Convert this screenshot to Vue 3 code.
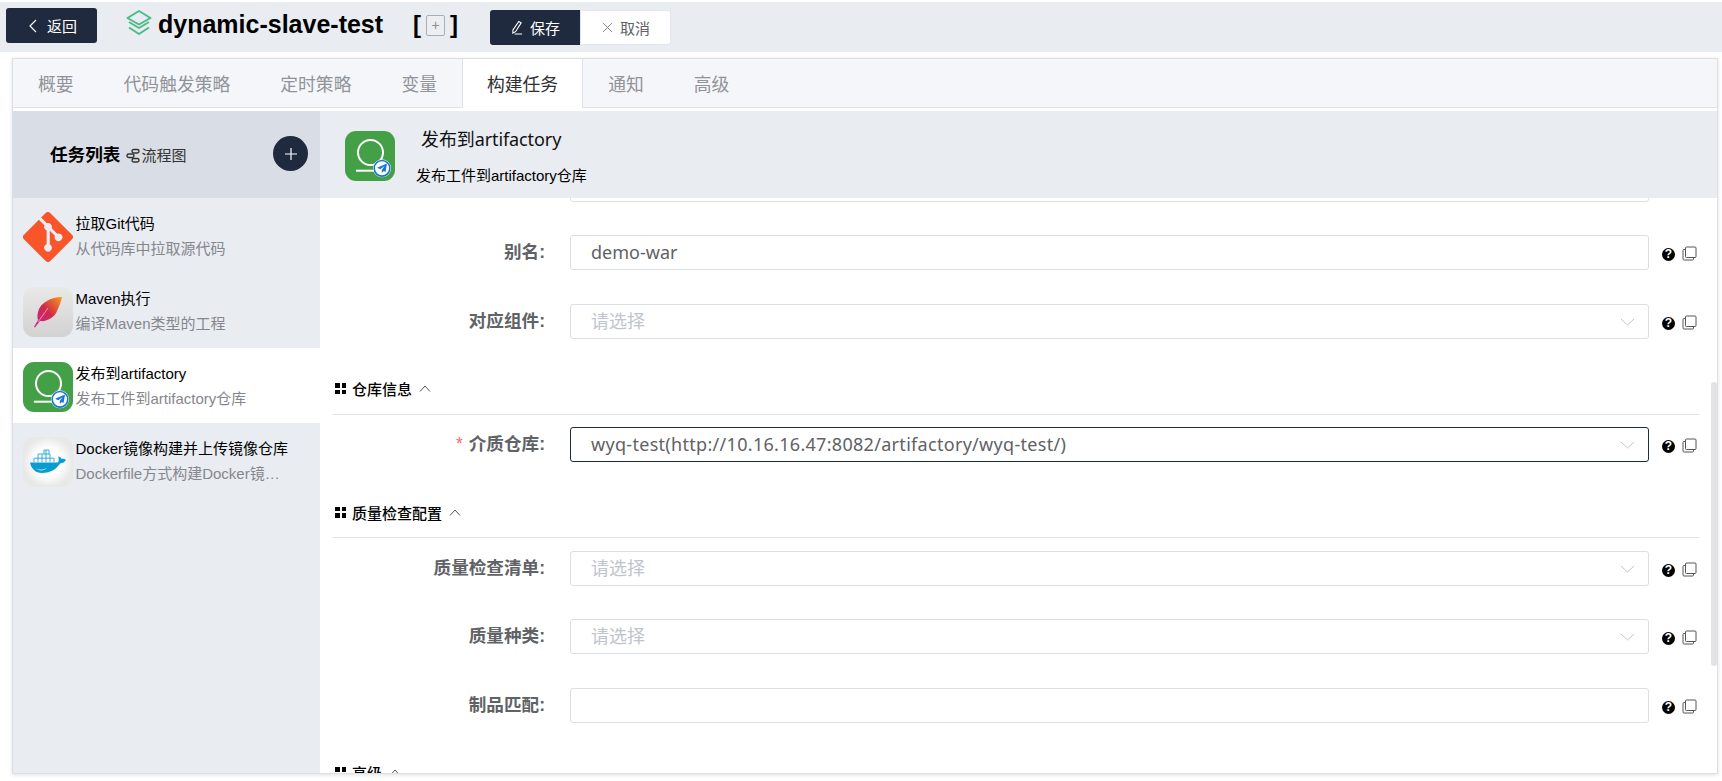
<script setup>
const tabs = ['概要', '代码触发策略', '定时策略', '变量', '构建任务', '通知', '高级']
const tasks = [
  { icon: 'git', title: '拉取Git代码', desc: '从代码库中拉取源代码' },
  { icon: 'maven', title: 'Maven执行', desc: '编译Maven类型的工程' },
  { icon: 'art', title: '发布到artifactory', desc: '发布工件到artifactory仓库', active: true },
  { icon: 'docker', title: 'Docker镜像构建并上传镜像仓库', desc: 'Dockerfile方式构建Docker镜像并上传' },
]
const form = [
  { label: '', value: '' },
  { label: '别名', value: 'demo-war' },
  { label: '对应组件', placeholder: '请选择', select: true },
  { section: '仓库信息' },
  { label: '介质仓库', value: 'wyq-test(http://10.16.16.47:8082/artifactory/wyq-test/)', select: true, required: true, focus: true },
  { section: '质量检查配置' },
  { label: '质量检查清单', placeholder: '请选择', select: true },
  { label: '质量种类', placeholder: '请选择', select: true },
  { label: '制品匹配', value: '' },
  { section: '高级' },
]
</script>

<template>
  <div class="page">
    <svg class="defs" width="0" height="0" aria-hidden="true">
      <defs>
        <linearGradient id="mavenBg" x1="0" y1="0" x2="0" y2="1"><stop offset="0" stop-color="#e9e9e8" /><stop offset="1" stop-color="#d2d2d2" /></linearGradient>
        <linearGradient id="feather" x1="1" y1="0" x2="0" y2="1"><stop offset="0" stop-color="#f89a14" /><stop offset=".5" stop-color="#d0284c" /><stop offset="1" stop-color="#c9279a" /></linearGradient>
        <radialGradient id="dockerBg"><stop offset=".55" stop-color="#ffffff" /><stop offset="1" stop-color="#e8e8e8" /></radialGradient>
        <symbol id="git" viewBox="0 0 92 92">
          <path fill="#f9552b" d="M90.156 41.965 50.036 1.848a5.918 5.918 0 0 0-8.372 0l-8.328 8.332 10.566 10.566a7.03 7.03 0 0 1 7.23 1.684 7.034 7.034 0 0 1 1.669 7.277l10.187 10.184a7.028 7.028 0 0 1 7.278 1.672 7.04 7.04 0 0 1 0 9.957 7.05 7.05 0 0 1-9.965 0 7.044 7.044 0 0 1-1.528-7.66l-9.5-9.497V59.36a7.04 7.04 0 0 1 1.86 11.29 7.04 7.04 0 0 1-9.957 0 7.04 7.04 0 0 1 0-9.958 7.06 7.06 0 0 1 2.304-1.539V33.926a7.049 7.049 0 0 1-3.82-9.234L29.242 14.272 1.73 41.777a5.925 5.925 0 0 0 0 8.371L41.852 90.27a5.925 5.925 0 0 0 8.37 0l39.934-39.934a5.925 5.925 0 0 0 0-8.371" />
        </symbol>
        <symbol id="maven" viewBox="0 0 50 50">
          <rect width="50" height="50" rx="11" fill="url(#mavenBg)" />
          <path fill="url(#feather)" d="M39 10C28 10 17 16 15 25 14 29 14.500 31 15 33L11 40 12 40.500 17 34C24 35 32 30 34 24 36.500 19 38 14 39 10Z" />
          <path fill="none" stroke="#f3b6c4" stroke-width=".8" d="M15 35 25 21" />
        </symbol>
        <symbol id="art" viewBox="0 0 50 50">
          <rect width="50" height="50" rx="11" fill="#43a047" />
          <circle cx="25.500" cy="21.500" r="12.500" fill="none" stroke="#fff" stroke-width="2" />
          <path stroke="#fff" stroke-width="2" d="M11 39.700H32" />
          <circle cx="37" cy="37.300" r="9" fill="#fff" />
          <circle cx="37" cy="37.300" r="7.800" fill="#fff" stroke="#1976d2" stroke-width="1.600" />
          <path fill="#1976d2" d="M42 32.500 32 36.800l3.300 1.500 4.300-3.200-2.800 4v3l2-2 1.800 1Z" />
        </symbol>
        <symbol id="docker" viewBox="0 0 50 50">
          <rect width="50" height="50" rx="11" fill="url(#dockerBg)" />
          <path fill="#0a9ccf" d="M7 25.500H35C36 23.500 36 21.500 35 19.500 36.500 19.500 38 20.500 38.500 22 40 21.500 42 22 43 23 41.500 25.500 39 26.500 37 26.500 34 31.500 28 36 19 36 12 36 8 31 7 25.500Z" />
          <path fill="none" stroke="#0a9ccf" stroke-width=".8" d="M11 25V21.200H31V25M15 21V17H27V21M21 17V13H26V17M15 25V21M19 25V17M23 25V13M27 25V21" />
          <path fill="#fff" d="M13 31C17 33.500 21 32.500 24 31 21 34 16 34.500 13 31Z" opacity=".8" />
        </symbol>
      </defs>
    </svg>

    <header class="topbar">
      <button class="back">
        <svg class="back-ico" viewBox="0 0 8 14" width="8" height="14"><path d="M7 1 1 7l6 6" fill="none" stroke="#fff" stroke-width="1.200" /></svg>
        <span>返回</span>
      </button>
      <svg class="layers" viewBox="0 0 26 26" width="26" height="26">
        <g fill="none" stroke="#4cbb8a" stroke-width="2" stroke-linejoin="round">
          <path d="M13 1 24.500 8 13 14.500 1.500 8Z" />
          <path d="M3 12 13 18 23 12" />
          <path d="M3 17.500 13 24 23 17.500" />
        </g>
      </svg>
      <h1 class="title">dynamic-slave-test</h1>
      <span class="bracket bl">[</span>
      <span class="plus-box">+</span>
      <span class="bracket br">]</span>
      <div class="actions">
        <button class="save">
          <svg viewBox="0 0 14 16" width="13" height="15"><path d="M9.500 1.500 12 3 6 12.500 3 14l.2-3.500ZM5 15h8" fill="none" stroke="#fff" stroke-width="1.200" /></svg>
          <span>保存</span>
        </button>
        <button class="cancel">
          <svg viewBox="0 0 12 12" width="11" height="11"><path d="M1 1l10 10M11 1 1 11" fill="none" stroke="#7b7f88" stroke-width="1" /></svg>
          <span>取消</span>
        </button>
      </div>
    </header>

    <main class="card">
      <nav class="tabs">
        <span v-for="t in tabs" :key="t" class="tab" :class="{ active: t === '构建任务' }">{{ t }}</span>
      </nav>
      <div class="body">
        <aside class="side">
          <div class="side-head">
            <strong class="list-title">任务列表</strong>
            <svg class="flow-ico" viewBox="0 0 15 15" width="15" height="15"><g fill="none" stroke="#333" stroke-width="1.400"><rect x="6" y="1.500" width="7" height="3.500" rx="1.700" /><rect x="1" y="6" width="7" height="3.500" rx="1.700" /><rect x="6" y="10.500" width="7" height="3.500" rx="1.700" /></g></svg>
            <span class="flow-text">流程图</span>
            <span class="add"><svg viewBox="0 0 14 14" width="14" height="14"><path d="M7 1v12M1 7h12" stroke="#fff" stroke-width="1.200" /></svg></span>
          </div>
          <div v-for="t in tasks" :key="t.icon" class="task" :class="{ on: t.active }">
            <svg class="task-ico" width="50" height="50"><use :href="'#' + t.icon" /></svg>
            <div class="task-text">
              <div class="task-title">{{ t.title }}</div>
              <div class="task-desc">{{ t.desc }}</div>
            </div>
          </div>
        </aside>
        <section class="content">
          <div class="content-head">
            <svg class="head-ico" width="50" height="50"><use href="#art" /></svg>
            <div class="head-text">
              <div class="head-title">发布到artifactory</div>
              <div class="head-desc">发布工件到artifactory仓库</div>
            </div>
          </div>
          <div class="scroller">
            <div class="thumb"></div>
            <div class="form">
              <template v-for="(f, i) in form" :key="i">
                <div v-if="f.section" class="section">
                  <span class="grid4"><i></i><i></i><i></i><i></i></span>
                  <span class="sec-name">{{ f.section }}</span>
                  <svg viewBox="0 0 12 7" width="12" height="7"><path d="M1 6.500 6 1l5 5.500" fill="none" stroke="#555" stroke-width="1" /></svg>
                </div>
                <div v-else class="row">
                  <label class="label"><em v-if="f.required">*</em><template v-if="f.label">{{ f.label }}:</template></label>
                  <div class="input" :class="{ focus: f.focus }">
                    <span v-if="f.value">{{ f.value }}</span>
                    <span v-else class="ph">{{ f.placeholder }}</span>
                    <svg v-if="f.select" class="chev" viewBox="0 0 15 8" width="15" height="8"><path d="M1 1l6.500 6L14 1" fill="none" stroke="#c0c4cc" stroke-width="1" /></svg>
                  </div>
                  <template v-if="f.label">
                    <span class="help">?</span>
                    <svg class="copy" viewBox="0 0 15 15" width="15" height="15"><g fill="none" stroke="#555" stroke-width="1"><rect x="3.500" y="1" width="10.500" height="10.500" rx="1" /><path d="M3.500 3.500H2A1 1 0 0 0 1 4.500V13a1 1 0 0 0 1 1h8.500a1 1 0 0 0 1-1V11.500" /></g></svg>
                  </template>
                </div>
              </template>
            </div>
          </div>
        </section>
      </div>
    </main>
  </div>
</template>

<style>
html, body { margin: 0; background: #fff; overflow: hidden; }
</style>

<style scoped>
.page {
  width: 1722px;
  height: 781px;
  overflow: hidden;
  padding-top: 2px;
  box-sizing: border-box;
  font-family: "Liberation Sans", "Noto Sans CJK SC", sans-serif;
}
.defs { position: absolute; }
button { font-family: inherit; border: 0; padding: 0; cursor: pointer; }

.topbar {
  height: 50px;
  background: #e9ecf1;
  display: flex;
  align-items: center;
  position: relative;
  padding-left: 6px;
}
.back {
  width: 91px;
  height: 35px;
  margin-top: -3px;
  background: #1f2a3e;
  border-radius: 3px;
  color: #fff;
  font-size: 15px;
  display: flex;
  align-items: center;
  padding-left: 23px;
  gap: 10px;
  box-sizing: border-box;
}
.layers { margin-left: 29px; margin-right: 6px; margin-top: -9px; }
.title {
  margin: -6px 0 0 0;
  font-size: 25px;
  font-weight: 700;
  color: #000;
  width: 255px;
  white-space: nowrap;
}
.bracket { font-size: 24px; font-weight: 700; color: #000; margin-top: -5px; }
.plus-box {
  width: 17px;
  height: 19px;
  margin: -4px 5px 0 5px;
  border: 1px solid #a9adb5;
  border-radius: 2px;
  background: #eceef2;
  color: #8a8e96;
  font-size: 14px;
  line-height: 19px;
  text-align: center;
}
.actions { display: flex; margin-left: 32px; margin-top: 1px; }
.save, .cancel {
  height: 35px;
  width: 90px;
  font-size: 15px;
  display: flex;
  align-items: center;
  box-sizing: border-box;
}
.save { background: #1f2a3e; color: #fff; border-radius: 3px 0 0 3px; padding-left: 20px; gap: 7px; }
.cancel { background: #fff; color: #606266; width: 91px; border: 1px solid #e4e6ec; border-radius: 0 3px 3px 0; padding-left: 21px; gap: 7px; }

.card {
  margin: 6px 4px 0 12px;
  height: 716px;
  border: 1px solid #dcdfe6;
  box-shadow: 0 1px 4px rgba(0, 0, 0, .12);
  box-sizing: border-box;
  background: #fff;
  overflow: hidden;
  display: flex;
  flex-direction: column;
}
.tabs {
  height: 49px;
  flex: none;
  background: #f5f6fa;
  border-bottom: 1px solid #dfe2ea;
  box-sizing: border-box;
  display: flex;
  padding-left: 0;
  font-size: 17.800px;
  color: #909399;
}
.tab { padding: 0 25px; line-height: 52px; height: 49px; box-sizing: border-box; }
.tab.active {
  color: #303133;
  background: #fff;
  border-left: 1px solid #dfe2ea;
  border-right: 1px solid #dfe2ea;
  padding: 0 24px;
}

.body { flex: 1; display: flex; margin-top: 3px; min-height: 0; }
.side { width: 307px; flex: none; background: #e9ecf1; }
.side-head {
  height: 87px;
  background: #d9dde5;
  display: flex;
  align-items: center;
  padding-left: 37px;
  position: relative;
}
.list-title { font-size: 17.600px; color: #000; margin-top: -2px; }
.flow-ico { margin-left: 6px; margin-top: 1px; }
.flow-text { font-size: 15px; color: #333; }
.add {
  position: absolute;
  left: 260px;
  top: 25px;
  width: 35px;
  height: 35px;
  border-radius: 50%;
  background: #1f2a3e;
  display: flex;
  align-items: center;
  justify-content: center;
}
.task {
  height: 75px;
  display: flex;
  align-items: center;
  padding-left: 10px;
  gap: 2.500px;
  font-size: 15px;
}
.task.on { background: #fff; }
.task-ico { flex: none; margin-top: 3px; }
.task-text { width: 205px; margin-top: 2px; }
.task-title { color: #000; line-height: 18px; white-space: nowrap; }
.task-desc {
  color: #85878c;
  line-height: 18px;
  margin-top: 7px;
  white-space: nowrap;
  overflow: hidden;
  text-overflow: ellipsis;
}

.content { flex: 1; min-width: 0; display: flex; flex-direction: column; }
.content-head {
  height: 87px;
  flex: none;
  background: #e9ecf1;
  position: relative;
  display: flex;
  padding-left: 25px;
}
.head-ico { margin-top: 20px; flex: none; }
.head-text { margin-left: 21px; }
.head-title {
  font-family: "Noto Sans", "Noto Sans CJK SC", sans-serif;
  font-size: 18px;
  letter-spacing: -.1px;
  color: #111;
  line-height: 24px;
  margin: 16px 0 0 5px;
}
.head-desc { font-size: 15px; color: #000; line-height: 18px; margin-top: 16px; }

.scroller { flex: 1; position: relative; overflow: hidden; }
.thumb {
  position: absolute;
  right: 0;
  top: 184px;
  width: 6px;
  height: 284px;
  background: #e3e3e5;
  border-radius: 3px;
}
.form { margin-top: -31.500px; padding: 0 18px 0 13px; }
.row {
  display: flex;
  align-items: center;
  height: 35px;
  margin-bottom: 33.500px;
}
.label {
  width: 212px;
  margin-right: 25px;
  margin-top: -4px;
  flex: none;
  text-align: right;
  font-size: 17.600px;
  font-weight: 700;
  color: #606266;
}
.label em { color: #f56c6c; font-style: normal; font-weight: 400; margin-right: 6px; }
.input {
  width: 1079px;
  height: 35px;
  box-sizing: border-box;
  border: 1px solid #dcdee6;
  border-radius: 3px;
  padding-left: 20px;
  font-family: "Noto Sans", "Noto Sans CJK SC", sans-serif;
  font-size: 18px;
  line-height: 32px;
  color: #606266;
  position: relative;
  flex: none;
}
.input.focus { border-color: #1f2a3e; letter-spacing: .3px; }
.ph { color: #c0c4cc; }
.chev { position: absolute; right: 13px; top: 13px; }
.help {
  width: 13px;
  height: 13px;
  margin-left: 13px;
  margin-top: 4px;
  border-radius: 50%;
  background: #000;
  color: #fff;
  font-size: 12px;
  font-weight: 700;
  line-height: 13px;
  text-align: center;
  flex: none;
}
.copy { margin-left: 7px; margin-top: 2px; flex: none; }
.section {
  height: 22px;
  margin-top: 39px;
  padding-bottom: 14px;
  margin-bottom: 12.500px;
  border-bottom: 1px solid #e0e2e9;
  display: flex;
  align-items: center;
  padding-left: 2px;
  font-size: 15px;
  color: #000;
  font-weight: 500;
}
.grid4 { display: grid; grid-template-columns: 4.500px 4.500px; gap: 2px; width: 11px; margin-right: 6px; }
.grid4 i { width: 4.500px; height: 4.500px; background: #000; }
.sec-name { margin-right: 7px; }
</style>
